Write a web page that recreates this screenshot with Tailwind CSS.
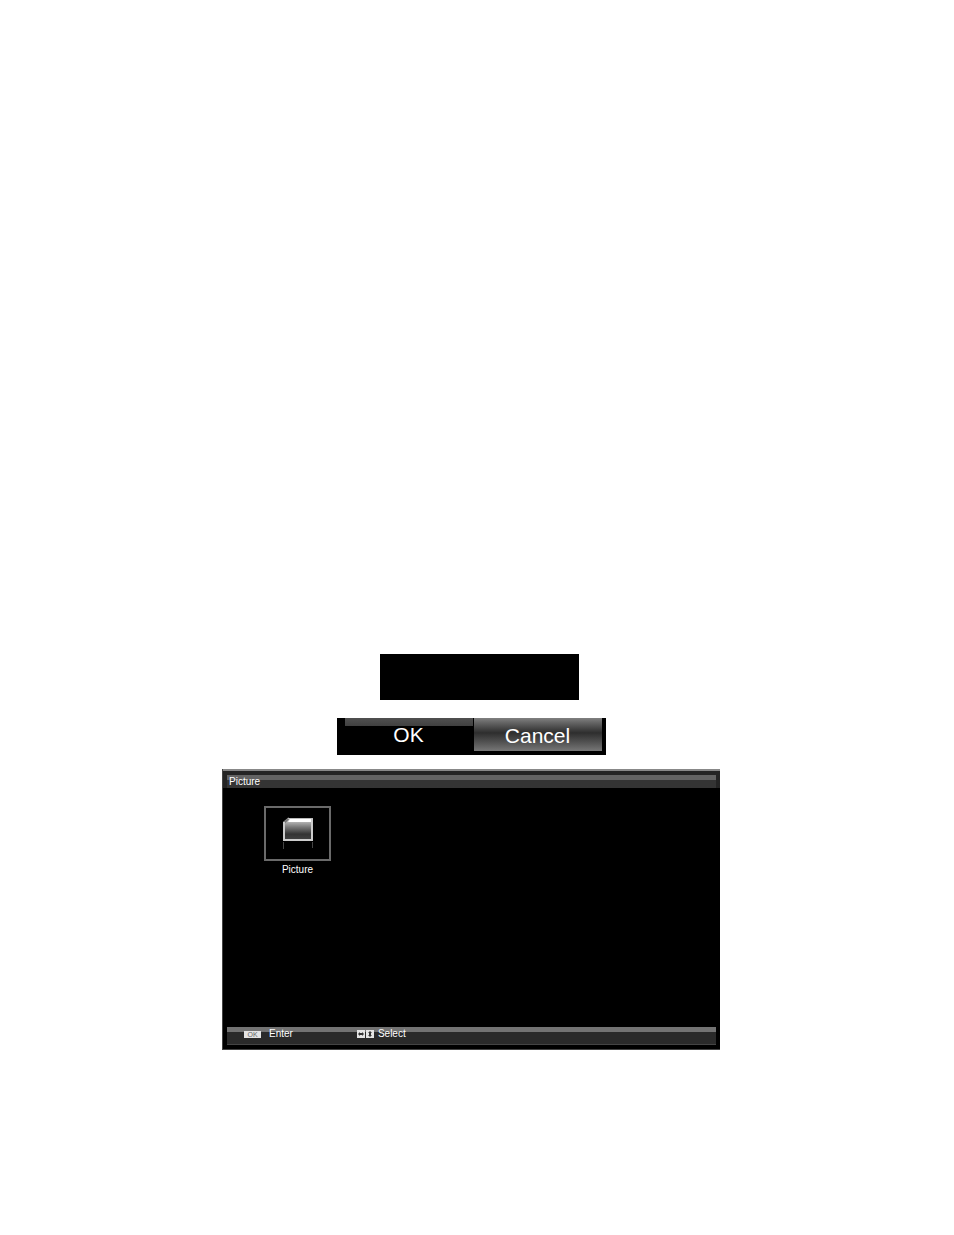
<!DOCTYPE html>
<html lang="en">
<head>
  <meta charset="UTF-8" />
  <meta name="viewport" content="width=device-width, initial-scale=1.0" />
  <title>Picture</title>
  <script src="https://cdn.jsdelivr.net/npm/@tailwindcss/browser@4"></script>
</head>
<body class="bg-white min-h-screen font-['Liberation_Sans',Arial,sans-serif] text-white">
  <main class="flex flex-col items-center pt-[654px] pr-3 pb-16">
    <!-- Empty message box -->
    <div class="w-full max-w-[199px] h-[46px] bg-black translate-x-2"></div>

    <!-- Confirm dialog buttons -->
    <div class="w-full max-w-[269px] mt-[18px] bg-black flex pl-2 pr-1 pb-1 text-[21px] leading-8">
      <button type="button" class="flex-1 h-[33px] border-r border-black bg-linear-to-b from-[#505050] from-0% via-[#404040] via-25% to-black to-25%">OK</button>
      <button type="button" class="flex-1 h-[33px] pt-0.5 bg-linear-to-b from-[#808080] from-0% via-[#2e2e2e] via-45% to-[#777] to-100%">Cancel</button>
    </div>

    <!-- Picture browser -->
    <section class="w-full max-w-[498px] mt-[14px] bg-black flex flex-col border-l border-b border-[#444]">
      <header class="h-[19px] border-t-2 border-[#888] bg-[#242424] px-1 pt-1">
        <h1 class="h-[13px] pl-0.5 text-[10px] leading-[14px] bg-linear-to-b from-[#636363] from-40% to-[#343434] to-40%">Picture</h1>
      </header>

      <div class="h-[239px] pl-[41px] pt-[18px]">
        <a href="#" class="w-[67px] flex flex-col items-center">
          <span class="w-full h-[55px] border-2 border-[#6a6a6a] flex items-center justify-center">
            <svg class="w-8 h-9" viewBox="0 0 32 36" fill="none" aria-hidden="true">
              <defs>
                <linearGradient id="folder" x1="0" y1="0" x2="0" y2="1">
                  <stop offset="0" stop-color="#e0e0e0" />
                  <stop offset="0.4" stop-color="#777" />
                  <stop offset="0.7" stop-color="#333" />
                  <stop offset="1" stop-color="#444" />
                </linearGradient>
              </defs>
              <path d="M1 6l5-4h25v23H1z" fill="url(#folder)" />
              <path d="M8 3h22v3H6z" fill="#fff" />
              <path d="M2 7L7 2" stroke="#777" stroke-width="2" />
              <path d="M2 6v18h28V3" stroke="#ccc" stroke-width="2" />
              <path d="M6 2.500h25" stroke="#bbb" />
              <path d="M1.500 26v7M30.500 26v6" stroke="#444" />
            </svg>
          </span>
          <span class="pt-0.5 text-[10px] leading-[14px]">Picture</span>
        </a>
      </div>

      <footer class="px-1 pb-1 bg-black">
        <div class="h-[18px] border-b border-[#444] pl-[17px] flex items-start gap-16 text-[10px] leading-[14px] bg-linear-to-b from-[#737373] from-30% to-[#2a2a2a] to-30%">
          <span class="flex items-center gap-2">
            <span class="w-[17px] h-[7px] bg-[#e4e4e4] text-[#666] text-[7px] leading-[7px] text-center">OK</span>
            Enter
          </span>
          <span class="flex items-center">
            <svg class="w-[17px] h-[8px] mr-1" viewBox="0 0 17 8" aria-hidden="true">
              <path d="M0 0h8v8H0zM9 0h8v8H9z" fill="#e4e4e4" />
              <path d="M1 4l2-2v1h2V2l2 2-2 2V5H3v1zM13 1l2 2h-1v2h1l-2 2-2-2h1V3h-1z" fill="#333" />
            </svg>
            Select
          </span>
        </div>
      </footer>
    </section>
  </main>
</body>
</html>
